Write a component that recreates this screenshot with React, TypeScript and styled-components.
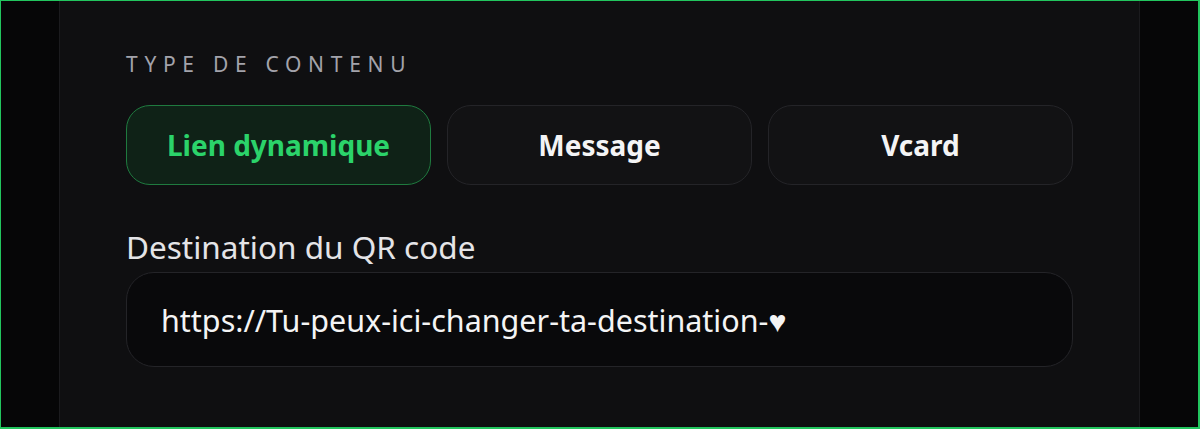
import React, { FC, useState } from "react";
import styled, { createGlobalStyle } from "styled-components";

const GlobalStyle = createGlobalStyle`
  html, body {
    margin: 0;
    padding: 0;
    background: #060607;
  }
  * {
    box-sizing: border-box;
  }
`;

const FONT = `"Segoe UI", "Noto Sans", "Open Sans", sans-serif`;

// Outer frame
const Frame = styled.div`
  width: 1200px;
  height: 429px;
  border-style: solid;
  border-color: #22c55e;
  border-width: 1px 2px 2px 1px;
  background: #060607;
  display: flex;
  justify-content: center;
  overflow: hidden;
  font-family: ${FONT};
`;

const Panel = styled.section`
  width: 1081px;
  flex-shrink: 0;
  height: 100%;
  background: #0f0f11;
  border-left: 1px solid #1b1b1e;
  border-right: 1px solid #1b1b1e;
  padding: 49px 66px 0 66px;
  display: flex;
  flex-direction: column;
`;

const SectionTitle = styled.h3`
  margin: 0;
  font-size: 21px;
  font-weight: 400;
  letter-spacing: 6.7px;
  color: #a3a3ab;
  text-transform: uppercase;
  line-height: 28px;
`;

const TypeRow = styled.div`
  display: grid;
  grid-template-columns: repeat(3, 1fr);
  gap: 16px;
  margin-top: 27px;
`;

const TypeButton = styled.button<{ $active?: boolean }>`
  height: 80px;
  border-radius: 24px;
  font-family: ${FONT};
  font-size: 28px;
  font-weight: 700;
  cursor: pointer;
  padding: 0;
  border: 1px solid ${(p) => (p.$active ? "#1f7a3f" : "#242428")};
  background: ${(p) => (p.$active ? "#0f2217" : "#121214")};
  color: ${(p) => (p.$active ? "#2bd36a" : "#f4f4f5")};
`;

const Field = styled.div`
  display: flex;
  flex-direction: column;
  margin-top: 43px;
`;

const FieldLabel = styled.label`
  font-size: 31.5px;
  color: #e4e4e7;
  line-height: 38px;
  margin-bottom: 6px;
`;

const UrlInput = styled.input`
  height: 95px;
  width: 100%;
  border-radius: 28px;
  border: 1px solid #242428;
  background: #09090b;
  color: #f4f4f5;
  font-family: ${FONT};
  font-size: 30.5px;
  padding: 0 34px;
  outline: none;
`;

const TYPES = ["Lien dynamique", "Message", "Vcard"];

const App: FC = () => {
  const [active, setActive] = useState(0);
  const [url, setUrl] = useState("https://Tu-peux-ici-changer-ta-destination-♥");

  return (
    <>
      <GlobalStyle />
      <Frame>
        <Panel>
          <SectionTitle>Type de contenu</SectionTitle>
          <TypeRow>
            {TYPES.map((t, i) => (
              <TypeButton key={t} $active={i === active} onClick={() => setActive(i)}>
                {t}
              </TypeButton>
            ))}
          </TypeRow>
          <Field>
            <FieldLabel htmlFor="dest">Destination du QR code</FieldLabel>
            <UrlInput id="dest" value={url} onChange={(e) => setUrl(e.target.value)} />
          </Field>
        </Panel>
      </Frame>
    </>
  );
};

export default App;
